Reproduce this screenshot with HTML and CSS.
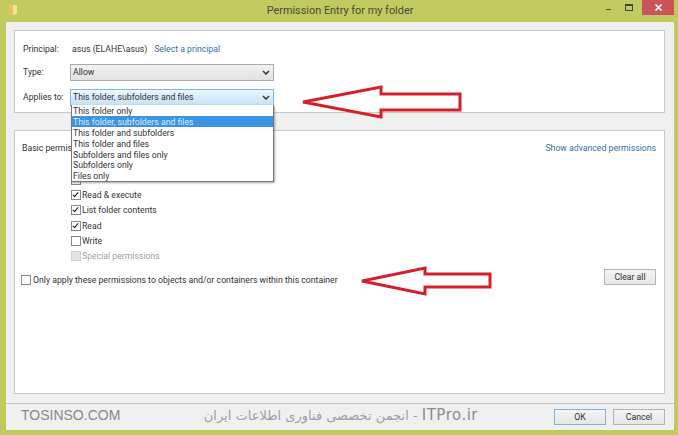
FILE: index.html
```html
<!DOCTYPE html>
<html lang="en">
<head>
    <meta charset="UTF-8">
    <title>Permission Entry for my folder</title>
    <link rel="stylesheet" href="styles.css">
</head>
<body>

<div class="window">
    <div class="titlebar">
        <svg class="folder-icon" width="10" height="13" viewBox="0 0 10 13">
            <path d="M0 1h4l1 1v10H1z" fill="#e6c45c"/>
            <path d="M5 2h4v9l-4 1z" fill="#f4e39a"/>
        </svg>
        <div class="title">Permission Entry for my folder</div>
        <div class="controls">
            <span class="min-btn"></span>
            <span class="max-btn"></span>
            <span class="close-btn">
                <svg width="9" height="9" viewBox="0 0 9 9"><path d="M1.5 1.5l6 6M7.5 1.5l-6 6" stroke="#fff" stroke-width="1.6"/></svg>
            </span>
        </div>
    </div>

    <div class="content">
        <div class="panel panel-top">
            <div class="row row-principal">
                <span class="label">Principal:</span>
                <span>asus (ELAHE\asus)</span>
                <a class="link">Select a principal</a>
            </div>
            <div class="row row-type">
                <span class="label">Type:</span>
                <div class="select">
                    <span>Allow</span>
                    <svg class="chevron" width="8" height="5" viewBox="0 0 8 5"><path d="M1 1l3 3 3-3" fill="none" stroke="#333" stroke-width="1.5"/></svg>
                </div>
            </div>
            <div class="row row-applies">
                <span class="label">Applies to:</span>
                <div class="select select-open">
                    <span>This folder, subfolders and files</span>
                    <svg class="chevron" width="8" height="5" viewBox="0 0 8 5"><path d="M1 1l3 3 3-3" fill="none" stroke="#333" stroke-width="1.5"/></svg>
                </div>
            </div>
        </div>

        <div class="panel panel-bottom">
            <div class="perm-head">
                <span>Basic permis</span>
                <a class="link">Show advanced permissions</a>
            </div>
            <div class="perm-list">
                <div class="check-row"><span class="box on"></span></div>
                <div class="check-row"><span class="box on"></span>Read &amp; execute</div>
                <div class="check-row"><span class="box on"></span>List folder contents</div>
                <div class="check-row"><span class="box on"></span>Read</div>
                <div class="check-row"><span class="box"></span>Write</div>
                <div class="check-row disabled"><span class="box"></span>Special permissions</div>
            </div>
            <div class="only-row">
                <div class="check-row"><span class="box"></span>Only apply these permissions to objects and/or containers within this container</div>
                <button class="btn btn-clear">Clear all</button>
            </div>
        </div>
    </div>

    <div class="footer">
        <span class="mark-site">TOSINSO.COM</span>
        <span class="mark-text" dir="rtl"><span class="mark-latin">ITPro.ir</span> - انجمن تخصصی فناوری اطلاعات ایران</span>
        <div class="footer-btns">
            <button class="btn btn-default">OK</button>
            <button class="btn">Cancel</button>
        </div>
    </div>
</div>

<ul class="dropdown">
    <li>This folder only</li>
    <li class="selected">This folder, subfolders and files</li>
    <li>This folder and subfolders</li>
    <li>This folder and files</li>
    <li>Subfolders and files only</li>
    <li>Subfolders only</li>
    <li>Files only</li>
</ul>

<svg class="arrows" width="678" height="435" viewBox="0 0 678 435">
    <path d="M303 102L381 87V94H460V110H381V117Z"/>
    <path d="M362 281L425 268V274H490V287H425V294Z"/>
</svg>

</body>
</html>
```

FILE: styles.css
```css
html, body {
    margin: 0;
    padding: 0;
}
body {
    position: relative;
    width: 678px;
    height: 435px;
    overflow: hidden;
    font-family: Roboto, "Noto Sans", sans-serif;
    font-size: 8.7px;
    color: #333;
}
.window {
    display: flex;
    flex-direction: column;
    height: 430px;
    padding: 0 4px 5px 6px;
    background-color: #bfcb5e;
}
.titlebar {
    display: flex;
    align-items: center;
    position: relative;
    height: 22px;
    flex-shrink: 0;
}
.folder-icon {
    margin: -3px 0 0 2px;
}
.title {
    position: absolute;
    left: 0;
    right: 0;
    top: 3px;
    text-align: center;
    font-size: 10.9px;
    line-height: 15px;
    color: #4a4a3a;
}
.controls {
    display: flex;
    position: absolute;
    top: 0;
    right: 0;
    align-items: flex-start;
}
.min-btn {
    width: 5px;
    height: 1px;
    margin: 9px 14px 0 0;
    background-color: #555;
}
.max-btn {
    width: 6px;
    height: 4px;
    margin: 4px 9px 0 0;
    border: 1px solid #444;
    border-top-width: 2px;
}
.close-btn {
    display: flex;
    align-items: center;
    justify-content: center;
    width: 32px;
    height: 15px;
    background-color: #c9545a;
}
.content {
    flex: 1;
    display: flex;
    flex-direction: column;
    gap: 17px;
    padding: 8px 9px 9px 8px;
    background-color: #f0f0f0;
    border-bottom: 1px solid #c4c4c4;
}
.panel {
    background-color: #fff;
    border: 1px solid #c8c8c8;
    box-sizing: border-box;
}
.panel-top {
    height: 83px;
    padding: 10px 8px 0;
}
.panel-bottom {
    flex: 1;
    padding: 10px 8px 0 7px;
}
.row {
    display: flex;
    align-items: center;
    height: 16px;
}
.row-principal {
    gap: 7px;
    margin-bottom: 7px;
}
.row-type {
    margin-bottom: 9px;
}
.label {
    width: 47px;
    flex-shrink: 0;
}
.row-principal .label {
    width: 42px;
}
.link {
    color: #3a6f9f;
}
.select {
    display: flex;
    align-items: center;
    justify-content: space-between;
    width: 204px;
    height: 17px;
    box-sizing: border-box;
    padding: 0 3px 0 2px;
    border: 1px solid #a9a9a9;
    background: linear-gradient(#f2f2f2, #e2e2e2);
}
.select-open {
    border-color: #7eb4dd;
    background: linear-gradient(#ecf6fd, #c4e2f7);
}
.perm-head {
    display: flex;
    justify-content: space-between;
    align-items: center;
    height: 13px;
}
/* the rows above Read & execute sit behind the open dropdown */
.perm-list {
    display: flex;
    flex-direction: column;
    gap: 4.9px;
    margin: 20.5px 0 0 49px;
}
.check-row {
    display: flex;
    align-items: center;
    gap: 1px;
    height: 10.4px;
}
.box {
    position: relative;
    width: 8px;
    height: 8px;
    flex-shrink: 0;
    border: 1px solid #8a8a8a;
    background-color: #fff;
}
.box.on::after {
    content: "";
    position: absolute;
    left: 2px;
    top: 0;
    width: 2px;
    height: 5px;
    border: solid #111;
    border-width: 0 1.5px 1.5px 0;
    transform: rotate(40deg);
}
.disabled {
    color: #a0a0a0;
}
.disabled .box {
    background-color: #e2e2e2;
    border-color: #cfcfcf;
}
.only-row {
    display: flex;
    justify-content: space-between;
    align-items: flex-start;
    margin-top: 8px;
}
.only-row .check-row {
    margin: 6px 0 0 -1px;
    gap: 2px;
}
.btn {
    width: 52px;
    height: 16px;
    padding: 0;
    font-family: inherit;
    font-size: 8.7px;
    color: #333;
    border: 1px solid #b4b4b4;
    background: linear-gradient(#f4f4f4, #e6e6e6);
}
.btn-default {
    border-color: #7eb4dd;
}
.footer {
    display: flex;
    align-items: center;
    height: 26px;
    flex-shrink: 0;
    padding: 0 9px 0 15px;
    background-color: #f0f0f0;
}
.mark-site {
    width: 100px;
    margin-bottom: 5px;
    font-family: "Liberation Sans", sans-serif;
    font-size: 14px;
    color: #888;
}
.mark-text {
    width: 276px;
    margin: 0 0 5px 81px;
    font-family: "DejaVu Sans", sans-serif;
    font-size: 13px;
    white-space: nowrap;
    color: #a0a0a0;
}
.mark-latin {
    font-size: 15px;
    letter-spacing: 0.5px;
    color: #8c8c8c;
}
.footer-btns {
    display: flex;
    gap: 7px;
    margin-left: auto;
}
.dropdown {
    position: absolute;
    left: 71px;
    top: 105px;
    width: 203px;
    height: 77px;
    margin: 0;
    padding: 0;
    box-sizing: border-box;
    list-style: none;
    background-color: #fff;
    border: 1px solid #777;
    border-top: none;
    box-shadow: 1px 1px 2px rgba(0, 0, 0, 0.35);
}
.dropdown li {
    height: 10.9px;
    line-height: 13px;
    padding-left: 1px;
    white-space: nowrap;
}
.dropdown .selected {
    background-color: #3b93e3;
    color: #dcebf8;
}
.arrows {
    position: absolute;
    left: 0;
    top: 0;
}
.arrows path {
    fill: none;
    stroke: #d81e2b;
    stroke-width: 3;
}
```
